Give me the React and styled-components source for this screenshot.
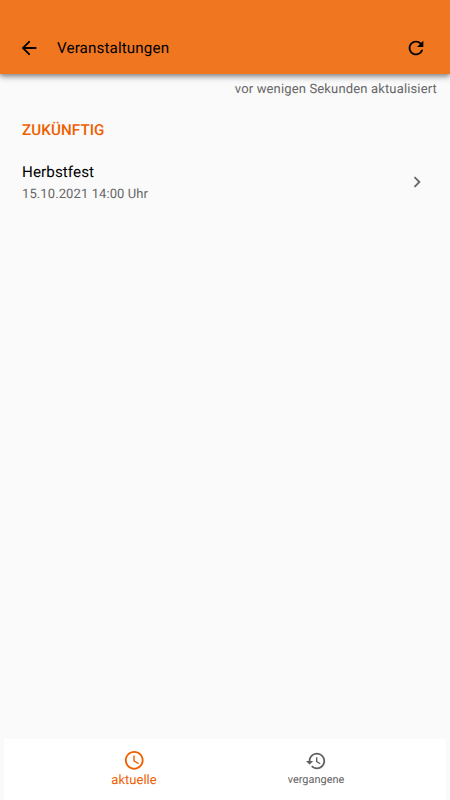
import styled, { createGlobalStyle } from 'styled-components'

const GlobalStyle = createGlobalStyle`
  * {
    box-sizing: border-box;
  }

  body {
    margin: 0;
    font-family: Roboto, sans-serif;
    text-rendering: geometricPrecision;
    background: #fafafa;
  }
`
const Screen = styled.div`
  display: flex;
  flex-direction: column;
  height: 100vh;
  overflow: hidden;
`
const AppBar = styled.header`
  display: flex;
  align-items: center;
  flex-shrink: 0;
  height: 74px;
  padding: 22px 23.5px 0 17.5px;
  color: #000;
  background: #f07620;
  box-shadow: 0 3px 6px rgba(0, 0, 0, 0.35), 0 2px 3px rgba(0, 0, 0, 0.15);
`
const Title = styled.h1`
  flex: 1;
  margin: 0 0 0 17.5px;
  font-size: 15.2px;
  font-weight: 400;
  line-height: 22px;
  letter-spacing: 0.12px;
`
const IconButton = styled.button`
  display: flex;
  padding: 0;
  border: 0;
  color: inherit;
  background: none;
`
const Icon = styled.svg`
  display: block;
  width: ${(props) => props.$size || 22}px;
  height: ${(props) => props.$size || 22}px;
  fill: currentColor;
`
const Content = styled.main`
  flex: 1;
`
const Status = styled.p`
  margin: 7px 13px 0 0;
  font-size: 13px;
  line-height: 17px;
  letter-spacing: 0.15px;
  text-align: right;
  color: #666;
`
const SectionTitle = styled.h2`
  margin: 21.5px 0 0 22px;
  font-size: 15.2px;
  font-weight: 500;
  line-height: 20px;
  letter-spacing: 0.08px;
  text-transform: uppercase;
  color: #ef6000;
`
const EventRow = styled.div`
  display: flex;
  align-items: center;
  justify-content: space-between;
  margin-top: 21.5px;
  padding: 0 22.5px 0 22px;
  color: #666;
`
const EventName = styled.div`
  font-size: 15.2px;
  line-height: 22px;
  letter-spacing: 0.08px;
  color: #000;
`
const EventDate = styled.div`
  margin-bottom: -4px;
  font-size: 13px;
  line-height: 24px;
  letter-spacing: 0.1px;
`
const NavBar = styled.nav`
  display: flex;
  justify-content: center;
  flex-shrink: 0;
  height: 61px;
  margin: 0 4px;
  background: #fff;
`
const NavItem = styled.div`
  display: flex;
  flex-direction: column;
  align-items: center;
  width: 182px;
  padding-top: ${(props) => (props.$active ? 10 : 11)}px;
  color: ${(props) => (props.$active ? '#ef6000' : '#616161')};
`
const NavLabel = styled.span`
  margin-top: ${(props) => (props.$active ? 0 : -1)}px;
  font-size: ${(props) => (props.$active ? 13 : 10.9)}px;
  line-height: 18px;
  letter-spacing: 0.03px;
`

const paths = {
  back: 'M20 11H7.83l5.59-5.59L12 4l-8 8 8 8 1.41-1.41L7.83 13H20v-2z',
  refresh:
    'M17.65 6.35C16.2 4.9 14.21 4 12 4c-4.42 0-7.99 3.58-7.99 8s3.57 8 7.99 8c3.73 0 6.84-2.55 7.73-6h-2.08c-.82 2.33-3.04 4-5.65 4-3.31 0-6-2.69-6-6s2.69-6 6-6c1.66 0 3.14.69 4.22 1.78L13 11h7V4l-2.35 2.35z',
  chevron: 'M10 6L8.59 7.41 13.17 12l-4.58 4.59L10 18l6-6z',
  clock:
    'M11.99 2C6.47 2 2 6.48 2 12s4.47 10 9.99 10C17.52 22 22 17.52 22 12S17.52 2 11.99 2zM12 20c-4.42 0-8-3.58-8-8s3.58-8 8-8 8 3.58 8 8-3.58 8-8 8zm.5-13H11v6l5.25 3.15.75-1.23-4.5-2.67z',
  history:
    'M13 3c-4.97 0-9 4.03-9 9H1l3.89 3.89.07.14L9 12H6c0-3.87 3.13-7 7-7s7 3.13 7 7-3.13 7-7 7c-1.93 0-3.68-.79-4.94-2.06l-1.42 1.42C8.27 19.99 10.51 21 13 21c4.97 0 9-4.03 9-9s-4.03-9-9-9zm-1 5v5l4.28 2.54.72-1.21-3.5-2.08V8H12z',
}

const MaterialIcon = ({ name, size }) => (
  <Icon viewBox="0 0 24 24" $size={size} aria-hidden="true">
    <path d={paths[name]} />
  </Icon>
)

const tabs = [
  { label: 'aktuelle', icon: 'clock', size: 22.5, active: true },
  { label: 'vergangene', icon: 'history', size: 22, active: false },
]

const App = () => (
  <>
    <GlobalStyle />
    <Screen>
      <AppBar>
        <IconButton aria-label="Zurück">
          <MaterialIcon name="back" />
        </IconButton>
        <Title>Veranstaltungen</Title>
        <IconButton aria-label="Aktualisieren">
          <MaterialIcon name="refresh" />
        </IconButton>
      </AppBar>
      <Content>
        <Status>vor wenigen Sekunden aktualisiert</Status>
        <SectionTitle>Zukünftig</SectionTitle>
        <EventRow>
          <div>
            <EventName>Herbstfest</EventName>
            <EventDate>15.10.2021 14:00 Uhr</EventDate>
          </div>
          <MaterialIcon name="chevron" />
        </EventRow>
      </Content>
      <NavBar>
        {tabs.map(({ label, icon, size, active }) => (
          <NavItem key={label} $active={active}>
            <MaterialIcon name={icon} size={size} />
            <NavLabel $active={active}>{label}</NavLabel>
          </NavItem>
        ))}
      </NavBar>
    </Screen>
  </>
)

export default App
